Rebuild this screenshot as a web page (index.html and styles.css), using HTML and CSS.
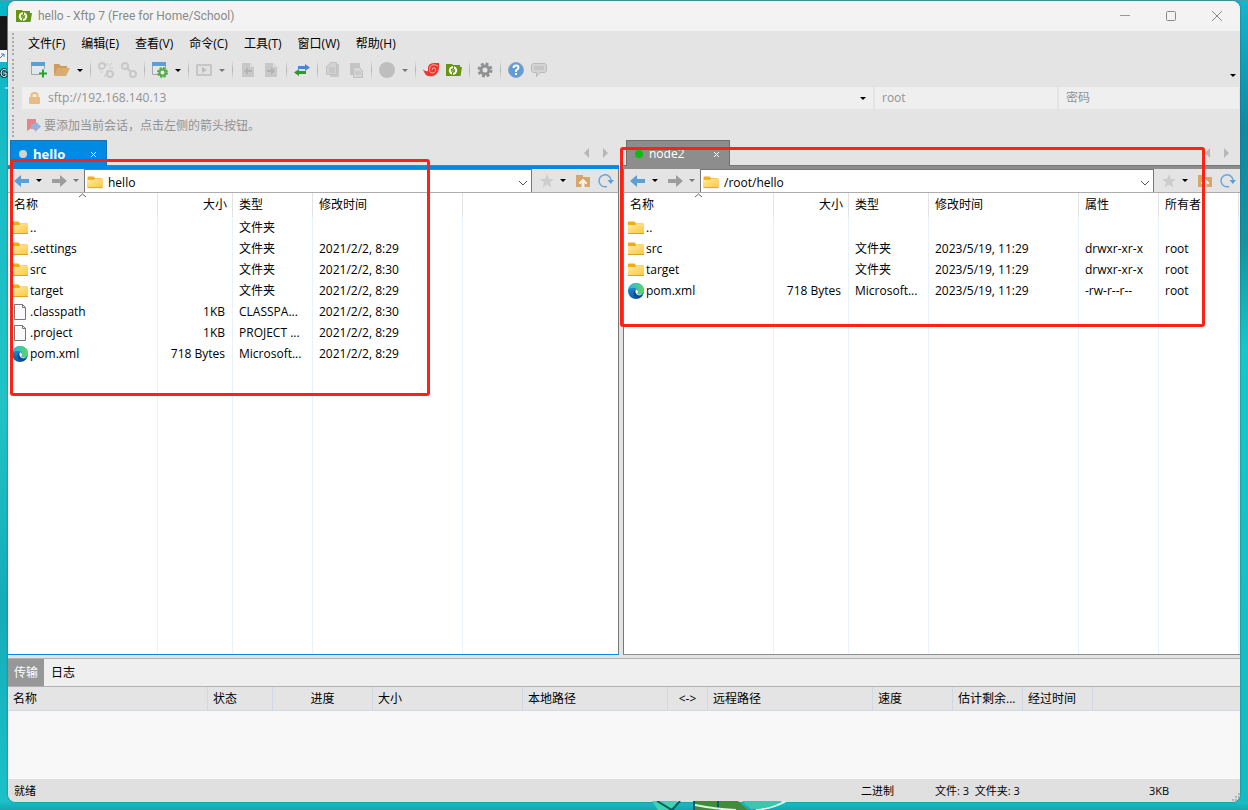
FILE: index.html
```html
<!DOCTYPE html>
<html lang="zh-CN">
<head>
<meta charset="utf-8">
<title>hello - Xftp 7 (Free for Home/School)</title>
<link rel="stylesheet" href="styles.css">
</head>
<body>
<svg width="0" height="0" class="defs" aria-hidden="true">
  <defs>
    <linearGradient id="gold" x1="0" y1="0" x2="1" y2="1"><stop offset="0" stop-color="#ffe9a2"/><stop offset="1" stop-color="#ffc83a"/></linearGradient>
    <linearGradient id="edgeBlue" x1="0" y1="0" x2="0" y2="1"><stop offset="0" stop-color="#1b9fe0"/><stop offset="1" stop-color="#0c59a4"/></linearGradient>
    <linearGradient id="edgeGreen" x1="0" y1="0" x2="1" y2="0"><stop offset="0" stop-color="#2bb5e8"/><stop offset="1" stop-color="#5fd85c"/></linearGradient>
  </defs>
  <symbol id="folder" viewBox="0 0 16 16"><path d="M0 2.5Q0 1.5 1 1.5H6.5L8 3.5H15Q16 3.5 16 4.5V13H0Z" fill="#f2ac0c"/><path d="M0 5H7L8.500 4H16V13.500H0Z" fill="url(#gold)"/><path d="M0 13.500H16" stroke="#dda127"/></symbol>
  <symbol id="file" viewBox="0 0 16 16"><path d="M2.500.500H10.500L13.500 3.500V15.500H2.500Z" fill="#f9f9f9" stroke="#777"/><path d="M10.500.500V3.500H13.500" fill="none" stroke="#777"/></symbol>
  <symbol id="edge" viewBox="0 0 16 16"><circle cx="8" cy="8" r="8" fill="url(#edgeBlue)"/><path d="M.500 6.500C2 2 5 0 8 0C13 0 16 3.500 16 7.300C16 10 14 11.600 11.500 11.600C10 11.600 9 11 9.600 10C10.600 8 9.500 5.300 6.500 5.100C3.500 5 1.500 5.500.500 6.500Z" fill="url(#edgeGreen)"/><path d="M8 6C4.500 8 5 13 7.500 14.500C10 16 13.500 14.500 15 11.500Q12 13.500 9.500 12C7 10.500 7 8 8 6Z" fill="#0b4c91"/><path d="M8 6.200C10 7 10.400 8.500 9.600 10C9.100 11 10 11.600 11.500 11.600Q13 11.600 14.500 10.900Q12.500 12.800 10 11.900C7.300 10.700 7 8 8 6.200Z" fill="#fff"/></symbol>
  <symbol id="back" viewBox="0 0 16 12"><path d="M0 6L7 0V4H15V8H7V12Z" fill="#5b9fd6"/></symbol>
  <symbol id="forward" viewBox="0 0 16 12"><path d="M16 6L9 0V4H1V8H9V12Z" fill="#9d9d9d"/></symbol>
  <symbol id="star" viewBox="0 0 14 14"><path d="M7 0L9 5H14L10 8.300L11.400 13.500L7 10.400L2.600 13.500L4 8.300L0 5H5Z" fill="#cdcdcd"/></symbol>
  <symbol id="up" viewBox="0 0 14 14"><path d="M0 1H7V3H14V13H0Z" fill="#d7a66b"/><path d="M3 9L7 5L11 9L10 10L8 8V13H6V8L4 10Z" fill="#f5efe8" stroke="#f5efe8"/></symbol>
  <symbol id="refresh" viewBox="0 0 16 14"><path d="M9 12.500A6 6 0 1 1 13 6" fill="none" stroke="#69a6dc" stroke-width="1.500"/><path d="M9.500 6H16L12.800 10Z" fill="#5b9fd6"/></symbol>
  <symbol id="xftp" viewBox="0 0 16 14"><path d="M0 1H6L7 2H14V4H16L14.500 13H0Z" fill="#65960c"/><circle cx="7" cy="7.500" r="4.200" fill="#fff"/><path d="M7.500 3V6M6.500 9V12M5.300 9V7Q5.300 5.600 6.700 5.600V8.500M8.700 6V8Q8.700 9.500 7.400 9.500V6.500" stroke="#65960c" fill="none"/></symbol>
  <symbol id="chain" viewBox="0 0 16 16"><g fill="none" stroke="#c8c8c8" stroke-width="2"><circle cx="4" cy="4" r="3"/><circle cx="12" cy="12" r="3"/><path d="M6 6L10 10"/></g></symbol>
  <symbol id="windowed" viewBox="0 0 16 16"><path d="M.500.500H13.500V12.500H.500Z" fill="#e5e7e9" stroke="#a4a6a8"/><path d="M0 0H14V4H0Z" fill="#5b9fd8"/></symbol>
  <symbol id="doc" viewBox="0 0 14 16"><path d="M1 1H9L13 5V15H1Z" fill="#c8c8c8"/><path d="M9 1V5H13" fill="#ddd"/></symbol>
</svg>

<svg class="wallpaper" aria-hidden="true">
  <rect x="0" y="16" width="7" height="34" fill="#171717"/><rect x="0" y="50" width="7" height="12" fill="#f4f7fa"/><path d="M0 58L4 54M1 54H4V57" stroke="#2787d8" fill="none"/>
  <path d="M6 70Q2 68 1 73Q2 78 6 76V73H4" fill="none" stroke="#073a40" stroke-width="3"/><path d="M6 70Q2 68 1 73Q2 78 6 76V73H4M5 88H8" fill="none" stroke="#effcff"/>
</svg>
<svg class="drawing" width="150" height="9" viewBox="0 0 150 9" aria-hidden="true"><path d="M0 0H25V4L16 9H6Z" fill="#45d0b0"/><path d="M5 0L20 9L28 0" fill="none" stroke="#075c68" stroke-width="2"/><path d="M42 0H86L96 9H42Z" fill="#418b3b"/><path d="M42 0V9M66 0V9" stroke="#075c68" stroke-width="2"/><path d="M43 4Q62 8 84 9M104 9Q121 7 134 0" stroke="#d9f6e7" stroke-width="2" fill="none"/><path d="M90 0H130Q120 8 99 8Z" fill="#3fc5ad"/></svg>

<div class="window">
  <header class="titlebar">
    <svg width="16" height="14"><use href="#xftp"/></svg>
    <h1>hello - Xftp 7 (Free for Home/School)</h1>
    <button aria-label="最小化"><svg width="12" height="12"><path d="M1 5.500H11" stroke="#999"/></svg></button>
    <button aria-label="最大化"><svg width="12" height="12"><rect x="1.500" y="1.500" width="9" height="9" rx="1" fill="none" stroke="#888"/></svg></button>
    <button aria-label="关闭"><svg width="12" height="12"><path d="M1 1L11 11M11 1L1 11" stroke="#888"/></svg></button>
  </header>

  <div class="bars">
    <div class="bar menu-row"><span class="grip"></span>
      <nav class="menu"><button>文件(F)</button><button>编辑(E)</button><button>查看(V)</button><button>命令(C)</button><button>工具(T)</button><button>窗口(W)</button><button>帮助(H)</button></nav>
    </div>
    <div class="bar tool-row"><span class="grip"></span>
      <div class="tools">
        <button class="tool" aria-label="新建"><svg width="16" height="16"><use href="#windowed"/><path d="M8 11H16M12 7V15" stroke="#e5e5e5" stroke-width="4"/><path d="M8 11.500H16M12 7.500V15.500" stroke="#25a62b" stroke-width="2"/></svg></button>
        <button class="tool" aria-label="打开"><svg width="16" height="14"><path d="M0 1H5L7 3H13V5H4L1 12H0Z" fill="#cd9c5c"/><path d="M4 5H16L12 13H0Z" fill="#d9ac72"/></svg></button>
        <button class="drop" aria-label="打开选项"><i class="caret"></i></button><i class="sep"></i>
        <button class="tool" aria-label="断开"><svg width="16" height="16"><use href="#chain"/><path d="M4 11L11 4" stroke="#e5e5e5" stroke-width="3"/><path d="M9 1V4M11 6H15M2 10H5M7 12V15M11 4L14 1" stroke="#c8c8c8"/></svg></button>
        <button class="tool" aria-label="重新连接"><svg width="16" height="16"><use href="#chain"/></svg></button><i class="sep"></i>
        <button class="tool" aria-label="属性"><svg width="16" height="16"><use href="#windowed"/><circle cx="10.500" cy="10.500" r="4" fill="#e5e5e5" stroke="#54ad4b" stroke-width="3" stroke-dasharray="2 1.140"/><circle cx="10.500" cy="10.500" r="3" fill="#eee" stroke="#54ad4b" stroke-width="2"/></svg></button>
        <button class="drop" aria-label="属性选项"><i class="caret"></i></button><i class="sep"></i>
        <button class="tool" aria-label="执行"><svg width="16" height="14"><rect x="1" y="2" width="14" height="10" fill="#e1e1e1" stroke="#c6c6c6" stroke-width="2"/><path d="M6 4L11 7L6 10Z" fill="#bdbdbd"/></svg></button>
        <button class="drop" aria-label="执行选项"><i class="caret dim"></i></button><i class="sep"></i>
        <button class="tool" aria-label="上传"><svg width="14" height="16"><use href="#doc"/><path d="M3 9L7 5V8H11V10H7V13Z" fill="#b2b2b2"/></svg></button>
        <button class="tool" aria-label="下载"><svg width="14" height="16"><use href="#doc"/><path d="M11 9L7 5V8H3V10H7V13Z" fill="#b2b2b2"/></svg></button><i class="sep"></i>
        <button class="tool" aria-label="同步"><svg width="16" height="14"><path d="M4 3H11V1L16 4.500L11 8V6H4Z" fill="#4788d0"/><path d="M12 8H5V6L0 9.500L5 13V11H12Z" fill="#289c28"/></svg></button><i class="sep"></i>
        <button class="tool" aria-label="复制"><svg width="14" height="16"><path d="M4 2H13V15H4Z" fill="#c8c8c8"/><path d="M4.500.500H10.500V12.500H.500V4.500Z" fill="#d2d2d2" stroke="#c2c2c2"/><path d="M3 6H9M3 8H9M3 10H9" stroke="#bdbdbd"/></svg></button>
        <button class="tool" aria-label="粘贴"><svg width="14" height="16"><path d="M1 1H11V13H1Z" fill="#c4c4c4"/><path d="M4.500 5.500H10.500L13.500 8.500V15.500H4.500Z" fill="#d6d6d6" stroke="#c0c0c0"/><path d="M6 10H12M6 12H12" stroke="#bdbdbd"/></svg></button><i class="sep"></i>
        <button class="tool" aria-label="停止"><svg width="16" height="16"><circle cx="8" cy="8" r="8" fill="#bebebe"/></svg></button>
        <button class="drop" aria-label="停止选项"><i class="caret dim"></i></button><i class="sep"></i>
        <button class="tool" aria-label="Xshell"><svg width="16" height="16"><path d="M0 7Q2 10 5 9Q4 1 11 1L16 1Q17 12 10 14Q2 16 0 7Z" fill="#ef352d"/><path d="M15 4Q9 1 7 5Q5 11 10 11Q14 10 12 6Q9 5 9 8" fill="none" stroke="#ffaaa5"/></svg></button>
        <button class="tool" aria-label="Xftp"><svg width="16" height="14"><use href="#xftp"/></svg></button><i class="sep"></i>
        <button class="tool" aria-label="选项"><svg width="16" height="16"><circle cx="8" cy="8" r="6" fill="none" stroke="#929292" stroke-width="3" stroke-dasharray="2.700 2"/><circle cx="8" cy="8" r="4" fill="none" stroke="#8f9294" stroke-width="3"/></svg></button><i class="sep"></i>
        <button class="tool" aria-label="帮助"><svg width="16" height="16"><circle cx="8" cy="8" r="7.500" fill="#629cd6" stroke="#8aa7c5"/><path d="M5.500 6Q5.500 3.500 8 3.500Q10.500 3.500 10.500 5.800Q10.500 7 8 8.500V10M8 11V13" fill="none" stroke="#fff" stroke-width="2"/></svg></button>
        <button class="tool" aria-label="反馈"><svg width="16" height="16"><path d="M2 1.500H14L15.500 3V9L14 10.500H9L5.500 14.500V10.500H2L.500 9V3Z" fill="#d3d3d3" stroke="#bababa"/><path d="M3 5H13M3 7H13" stroke="#b6b6b6"/></svg></button>
      </div>
      <button class="drop overflow" aria-label="更多"><i class="caret"></i></button>
    </div>
    <form class="bar address-row"><span class="grip"></span>
      <div class="fields">
        <label class="field host"><svg width="11" height="12"><path d="M2.500 6V3Q2.500 1 5.500 1Q8.500 1 8.500 3V6" fill="none" stroke="#e7bd82" stroke-width="2"/><rect y="5" width="11" height="7" rx="1" fill="#e9bd81"/></svg><input aria-label="地址" value="sftp://192.168.140.13"><i class="caret"></i></label>
        <label class="field"><input aria-label="用户名" value="root"></label>
        <label class="field"><input aria-label="密码" type="password" placeholder="密码"></label>
      </div>
    </form>
    <div class="bar hint-row"><span class="grip"></span>
      <p class="hint"><svg width="14" height="14"><path d="M0 0H9V12L4.500 9L0 12Z" fill="#e58589"/><path d="M4 5H8V2L14 7.500L8 13V10H4Z" fill="#93b3d8"/></svg>要添加当前会话，点击左侧的箭头按钮。</p>
    </div>
  </div>

  <main class="panes">
    <section class="pane local">
      <div class="tabs"><button class="tab"><i class="dot"></i><b>hello</b><svg width="7" height="7"><path d="M1 1L6 6M6 1L1 6" stroke="#fff"/></svg></button><span class="scroll"><button aria-label="向左"><i class="tri left"></i></button><button aria-label="向右"><i class="tri"></i></button></span></div>
      <div class="pathbar">
        <button class="nav" aria-label="后退"><svg width="16" height="12"><use href="#back"/></svg><i class="caret"></i></button>
        <button class="nav fwd" aria-label="前进"><svg width="16" height="12"><use href="#forward"/></svg><i class="caret dim"></i></button>
        <label class="path"><svg width="16" height="15"><use href="#folder"/></svg><input aria-label="本地路径" value="hello"><svg width="10" height="8"><path d="M1 2L5 6L9 2" fill="none" stroke="#555"/></svg></label>
        <button class="fav" aria-label="收藏"><svg width="14" height="14"><use href="#star"/></svg><i class="caret"></i></button>
        <button aria-label="上级目录"><svg width="14" height="14"><use href="#up"/></svg></button>
        <button aria-label="刷新"><svg width="16" height="14"><use href="#refresh"/></svg></button>
      </div>
      <div class="list">
        <table class="files">
          <colgroup><col class="w150"><col class="w75"><col class="w80"><col class="w150"><col></colgroup>
          <thead><tr><th><span class="sort"><svg width="9" height="5"><path d="M1 4L4.500 1L8 4" fill="none" stroke="#666"/></svg></span>名称</th><th class="num">大小</th><th>类型</th><th>修改时间</th><th></th></tr></thead>
          <tbody>
            <tr><td><span class="name"><svg width="16" height="16"><use href="#folder"/></svg>..</span></td><td></td><td>文件夹</td><td></td><td></td></tr>
            <tr><td><span class="name"><svg width="16" height="16"><use href="#folder"/></svg>.settings</span></td><td></td><td>文件夹</td><td>2021/2/2, 8:29</td><td></td></tr>
            <tr><td><span class="name"><svg width="16" height="16"><use href="#folder"/></svg>src</span></td><td></td><td>文件夹</td><td>2021/2/2, 8:30</td><td></td></tr>
            <tr><td><span class="name"><svg width="16" height="16"><use href="#folder"/></svg>target</span></td><td></td><td>文件夹</td><td>2021/2/2, 8:29</td><td></td></tr>
            <tr><td><span class="name"><svg width="16" height="16"><use href="#file"/></svg>.classpath</span></td><td class="num">1KB</td><td>CLASSPA...</td><td>2021/2/2, 8:30</td><td></td></tr>
            <tr><td><span class="name"><svg width="16" height="16"><use href="#file"/></svg>.project</span></td><td class="num">1KB</td><td>PROJECT ...</td><td>2021/2/2, 8:29</td><td></td></tr>
            <tr><td><span class="name"><svg width="16" height="16"><use href="#edge"/></svg>pom.xml</span></td><td class="num">718 Bytes</td><td>Microsoft...</td><td>2021/2/2, 8:29</td><td></td></tr>
            <tr class="rest"><td></td><td></td><td></td><td></td><td></td></tr>
          </tbody>
        </table>
      </div>
      <div class="mark"></div>
    </section>

    <section class="pane remote">
      <div class="tabs"><button class="tab"><i class="dot"></i><span>node2</span><svg width="7" height="7"><path d="M1 1L6 6M6 1L1 6" stroke="#fff"/></svg></button><span class="scroll"><button aria-label="向左"><i class="tri left"></i></button><button aria-label="向右"><i class="tri"></i></button></span></div>
      <div class="pathbar">
        <button class="nav" aria-label="后退"><svg width="16" height="12"><use href="#back"/></svg><i class="caret"></i></button>
        <button class="nav fwd" aria-label="前进"><svg width="16" height="12"><use href="#forward"/></svg><i class="caret dim"></i></button>
        <label class="path"><svg width="16" height="15"><use href="#folder"/></svg><input aria-label="远程路径" value="/root/hello"><svg width="10" height="8"><path d="M1 2L5 6L9 2" fill="none" stroke="#555"/></svg></label>
        <button class="fav" aria-label="收藏"><svg width="14" height="14"><use href="#star"/></svg><i class="caret"></i></button>
        <button aria-label="上级目录"><svg width="14" height="14"><use href="#up"/></svg></button>
        <button aria-label="刷新"><svg width="16" height="14"><use href="#refresh"/></svg></button>
      </div>
      <div class="list">
        <table class="files">
          <colgroup><col class="w150"><col class="w75"><col class="w80"><col class="w150"><col class="w80"><col class="w80"><col></colgroup>
          <thead><tr><th><span class="sort"><svg width="9" height="5"><path d="M1 4L4.500 1L8 4" fill="none" stroke="#666"/></svg></span>名称</th><th class="num">大小</th><th>类型</th><th>修改时间</th><th>属性</th><th>所有者</th><th></th></tr></thead>
          <tbody>
            <tr><td><span class="name"><svg width="16" height="16"><use href="#folder"/></svg>..</span></td><td></td><td></td><td></td><td></td><td></td><td></td></tr>
            <tr><td><span class="name"><svg width="16" height="16"><use href="#folder"/></svg>src</span></td><td></td><td>文件夹</td><td>2023/5/19, 11:29</td><td>drwxr-xr-x</td><td>root</td><td></td></tr>
            <tr><td><span class="name"><svg width="16" height="16"><use href="#folder"/></svg>target</span></td><td></td><td>文件夹</td><td>2023/5/19, 11:29</td><td>drwxr-xr-x</td><td>root</td><td></td></tr>
            <tr><td><span class="name"><svg width="16" height="16"><use href="#edge"/></svg>pom.xml</span></td><td class="num">718 Bytes</td><td>Microsoft...</td><td>2023/5/19, 11:29</td><td>-rw-r--r--</td><td>root</td><td></td></tr>
            <tr class="rest"><td></td><td></td><td></td><td></td><td></td><td></td><td></td></tr>
          </tbody>
        </table>
      </div>
      <div class="mark"></div>
    </section>
  </main>

  <section class="transfers">
    <div class="switch"><button class="on">传输</button><button class="log">日志</button></div>
    <table class="queue">
      <colgroup><col class="w200"><col class="w65"><col class="w100"><col class="w150"><col class="w145"><col class="w40"><col class="w165"><col class="w80"><col class="w70"><col class="w70"><col></colgroup>
      <thead><tr><th>名称</th><th>状态</th><th class="mid">进度</th><th>大小</th><th>本地路径</th><th class="mid">&lt;-&gt;</th><th>远程路径</th><th>速度</th><th>估计剩余...</th><th>经过时间</th><th></th></tr></thead>
    </table>
    <div class="empty"></div>
  </section>
  <footer class="status"><span>就绪</span><span>二进制</span><span>文件: 3&nbsp; 文件夹: 3</span><span>3KB</span><svg width="9" height="9"><path d="M7 1H9M4 4H6M7 4H9M1 7H3M4 7H6M7 7H9" stroke="#b4b4b4" stroke-width="2"/></svg></footer>
</div>
</body>
</html>
```
FILE: styles.css
```css
* { box-sizing: border-box; }
body {
  margin: 0;
  min-height: 100vh;
  padding: 1px 8px 8px;
  display: flex;
  font: 12px/16px "Open Sans", "Noto Sans CJK SC", sans-serif;
  color: #000;
  background:
    linear-gradient(#4b9fa8, #4b9fa8) top / 100% 1px no-repeat,
    linear-gradient(#1abfc5, #14a5b0) bottom / 100% 8px no-repeat,
    linear-gradient(#18b4ce, #1288a2 16%, #16939f 30%, #1ac6c8 43%, #18b9c1) right / 8px 100% no-repeat,
    linear-gradient(#08b6c8, #1abcc5 20%, #20c4c5 50%, #13acb8 75%, #1cc2c9);
}
svg { display: block; flex: none; }
.defs { position: absolute; }
.wallpaper { position: absolute; left: 0; top: 0; width: 8px; height: 100px; }
.drawing { position: absolute; left: 652px; bottom: 0; }
button { margin: 0; padding: 0; border: 0; background: none; font: inherit; color: inherit; }
input { border: 0; padding: 0; background: none; font: inherit; color: inherit; min-width: 0; flex: 1; outline: 0; }
h1, p { margin: 0; font-weight: 400; }

.window {
  flex: 1;
  min-width: 0;
  display: flex;
  flex-direction: column;
  background: #e4e4e4;
  border-radius: 8px;
  overflow: hidden;
  box-shadow: 0 0 2px #14616a;
}
.titlebar { display: flex; align-items: center; height: 30px; padding-left: 8px; background: #f3f3f3; color: #898989; }
.titlebar h1 { flex: 1; margin-left: 6px; font: 12px/16px Roboto, sans-serif; }
.titlebar button { display: flex; justify-content: center; width: 46px; }

.bars { display: flex; flex-direction: column; }
.bar { display: flex; align-items: center; gap: 8px; padding-left: 4px; height: 26px; }
.grip { width: 2px; height: 22px; background: repeating-linear-gradient(#a9a9a9 0 2px, #e4e4e4 2px 4px); }
.menu { display: flex; gap: 16px; padding-left: 6px; }
.tools { display: flex; align-items: center; padding-left: 5px; }
.tool { width: 23px; height: 20px; display: flex; align-items: center; justify-content: center; }
.drop { width: 13px; display: flex; justify-content: center; }
.overflow { margin: 10px 1px 0 auto; }
.caret { width: 0; height: 0; border: 3px solid transparent; border-top-color: #000; border-bottom: 0; }
.caret.dim { border-top-color: #777; }
.sep { width: 8px; height: 20px; background: linear-gradient(#e4e4e4, #b4b4b4, #e4e4e4) center / 1px 100% no-repeat; }
.address-row { height: 28px; padding-top: 2px; }
.fields { flex: 1; display: grid; grid-template-columns: 851fr 182fr 180fr; gap: 2px; padding-right: 1px; }
.field { display: flex; align-items: center; height: 22px; padding: 0 7px; background: #efefef; color: #929292; }
.field ::placeholder { color: #929292; opacity: 1; }
.host { gap: 8px; }
.hint-row { height: 29px; }
.hint { display: flex; align-items: center; gap: 3px; padding-left: 5px; color: #929292; }

.panes { flex: 1; display: grid; grid-template-columns: 611fr 617fr; gap: 4px; padding-bottom: 3px; }
.pane { --accent: #008ae3; position: relative; display: flex; flex-direction: column; border-bottom: 1px solid var(--accent); }
.remote { --accent: #8d8d8d; }
.tabs { display: flex; align-items: stretch; height: 29px; padding-left: 2px; border-bottom: 3px solid var(--accent); background: linear-gradient(#777, #777) bottom / 100% 1px no-repeat; }
.tab { display: flex; align-items: center; width: 97px; padding: 1px 9px 0 8px; background: var(--accent); border: 1px solid #1773b4; border-bottom: 0; color: #fff; }
.tab b { font-size: 13px; }
.remote .tab { width: 104px; border-color: #707070; }
.remote .tabs { padding-left: 3px; }
.tab svg { margin-left: auto; }
.dot { width: 8px; height: 8px; margin-right: 6px; border-radius: 50%; background: #d3d3d3; }
.remote .dot { background: #0bbd0b; }
.scroll { display: flex; gap: 14px; margin-left: auto; padding-right: 11px; }
.tri { display: block; border: 5px solid transparent; border-left-color: #b7b7b7; border-right-width: 0; }
.tri.left { border-width: 5px 5px 5px 0; border-right-color: #b7b7b7; }
.pathbar { display: flex; align-items: center; gap: 8px; height: 24px; padding: 0 4px 0 6px; border-bottom: 1px solid #adadad; border-right: 1px solid #777; }
.remote .pathbar { border-right: 0; border-left: 1px solid #777; }
.nav, .fav { display: flex; align-items: center; gap: 6px; }
.nav { margin-right: 1px; }
.fav { margin-right: 2px; }
.path { flex: 1; display: flex; align-items: center; align-self: flex-end; gap: 5px; height: 23px; margin-left: -4px; padding: 3px 3px 0 2px; border: 1px solid #777; border-bottom: 0; background: #fff; }

.list { flex: 1; display: flex; background: #fff; border-right: 1px solid #777; }
.remote .list { border-right: 0; border-left: 1px solid #777; }
table { width: 100%; table-layout: fixed; border-collapse: separate; border-spacing: 0; }
th { font-weight: 400; text-align: left; padding: 0 5px; white-space: nowrap; }
.w40 { width: 40px; } .w65 { width: 65px; } .w70 { width: 70px; } .w75 { width: 75px; }
.w80 { width: 80px; } .w100 { width: 100px; } .w145 { width: 145px; } .w150 { width: 150px; }
.w165 { width: 165px; } .w200 { width: 200px; }
.files th { position: relative; height: 24px; padding-left: 6px; border-right: 1px solid #e3e3e3; }
.files td { height: 21px; padding: 0 0 0 6px; border-right: 1px solid #e8f1fc; white-space: nowrap; }
.files td:first-child { padding-left: 4px; }
.files .rest td { height: auto; }
.files th:last-child, .files td:last-child { border-right: 0; }
.files .num { text-align: right; padding-right: 7px; }
.files th.num { padding-right: 5px; }
.name { display: flex; align-items: center; gap: 2px; }
.sort { position: absolute; top: 0; left: 0; right: 0; display: flex; justify-content: center; }

.mark { position: absolute; border: 3px solid #ff2114; border-radius: 3px; }
.local .mark { left: 2px; top: 19px; width: 420px; height: 237px; }
.remote .mark { left: -3px; top: 7px; right: 35px; height: 180px; }

.transfers { border-top: 1px solid #b0b0b0; }
.switch { display: flex; height: 28px; background: #efefef; border-bottom: 1px solid #b0b0b0; }
.switch button { width: 36px; }
.switch .log { width: 38px; }
.switch .on { background: #979797; color: #fff; }
.queue th { height: 24px; border-right: 1px solid #d0d8e8; border-bottom: 1px solid #d0d8e8; }
.queue th:last-child { border-right: 0; }
.queue .mid { text-align: center; }
.empty { height: 68px; background: #f8f8f8; }
.status { display: grid; grid-template-columns: 847fr 74fr 214fr 82fr 9px; align-items: center; height: 23px; padding: 0 0 0 6px; background: #e0e0e0; font-size: 11px; }
.status svg { align-self: end; }
```
